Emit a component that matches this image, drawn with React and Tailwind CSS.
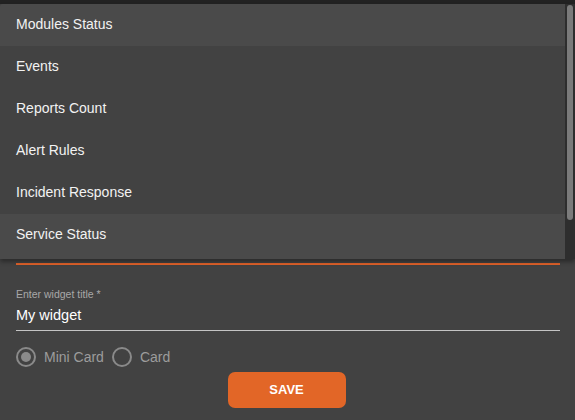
import React from "react";

const items = [
  { label: "Modules Status", active: true },
  { label: "Events" },
  { label: "Reports Count" },
  { label: "Alert Rules" },
  { label: "Incident Response" },
  { label: "Service Status", active: true, last: true },
];

export default function App() {
  return (
    <div
      className="relative w-[575px] h-[420px] overflow-hidden bg-[#424242]"
      style={{ fontFamily: '"Liberation Sans", Arial, sans-serif' }}
    >
      <div className="h-[4px] bg-[#222222]" />
      {/* form */}
      <div className="pl-4 pr-[15px]">
        <div className="h-[259px]" />
        <div className="h-[2px] bg-[#e0622a]" />
        <div className="mt-[22px] text-[10.5px] leading-[14px] text-[#a8a8a8]">
          Enter widget title *
        </div>
        <div className="mt-[4px] pb-[5px] border-b border-[#c4c4c4] text-[14.5px] leading-[20px] text-white font-medium">
          My widget
        </div>
        <div className="mt-[14px] flex items-center h-[24px] text-[14px] text-[#9c9c9c]">
          <span className="flex items-center justify-center w-[20px] h-[20px] rounded-full border-2 border-[#8a8a8a]">
            <span className="w-[10px] h-[10px] rounded-full bg-[#8a8a8a]" />
          </span>
          <span className="ml-[8px]">Mini Card</span>
          <span className="ml-[8px] w-[20px] h-[20px] rounded-full border-2 border-[#8a8a8a]" />
          <span className="ml-[8px]">Card</span>
        </div>
        <div className="mt-[3px] flex justify-center pr-[3px]">
          <button className="w-[118px] h-[36px] rounded-[7px] bg-[#e26627] text-white text-[13px] font-bold">
            SAVE
          </button>
        </div>
      </div>
      {/* dropdown menu */}
      <div className="absolute left-0 top-[4px] w-[575px] h-[255px] flex bg-[#424242] rounded-tl-[3px] overflow-hidden shadow-[0_3px_4px_rgba(0,0,0,0.35)]">
        <div className="flex-1 flex flex-col">
          {items.map((it) => (
            <div
              key={it.label}
              className={`${it.last ? "h-[45px] pb-[4px]" : "h-[42px] pb-[1px]"} flex items-center pl-4 text-[14px] text-[#f2f2f2] ${
                it.active ? "bg-[#4a4a4a]" : ""
              }`}
            >
              {it.label}
            </div>
          ))}
        </div>
        <div className="w-[10px] bg-[#2e2e2e] flex justify-center pt-[1px]">
          <div className="w-[6px] h-[215px] rounded-full bg-[#7b7b7b]" />
        </div>
      </div>
    </div>
  );
}
